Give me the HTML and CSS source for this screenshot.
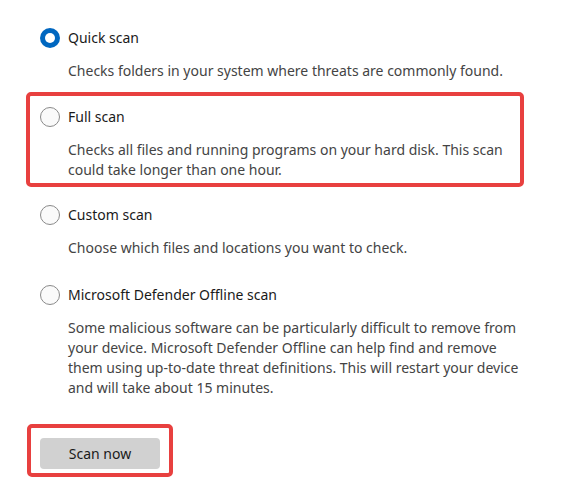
FILE: index.html
```html
<!DOCTYPE html>
<html lang="en">
<head>
<meta charset="utf-8">
<title>Scan options</title>
<link rel="stylesheet" href="styles.css">
</head>
<body>
<main class="page">
  <div class="option first">
    <div class="row"><span class="radio checked"></span><span class="label">Quick scan</span></div>
    <p class="desc">Checks folders in your system where threats are commonly found.</p>
  </div>
  <div class="option mark-box">
    <div class="row"><span class="radio"></span><span class="label">Full scan</span></div>
    <p class="desc">Checks all files and running programs on your hard disk. This scan could take longer than one hour.</p>
  </div>
  <div class="option custom">
    <div class="row"><span class="radio"></span><span class="label">Custom scan</span></div>
    <p class="desc">Choose which files and locations you want to check.</p>
  </div>
  <div class="option offline">
    <div class="row"><span class="radio"></span><span class="label">Microsoft Defender Offline scan</span></div>
    <p class="desc">Some malicious software can be particularly difficult to remove from your device. Microsoft Defender Offline can help find and remove them using up-to-date threat definitions. This will restart your device and will take about 15 minutes.</p>
  </div>
  <div class="btn-mark">
    <button class="scan-btn" type="button">Scan now</button>
  </div>
</main>
</body>
</html>
```
FILE: styles.css
```css
* { box-sizing: border-box; }
html, body { margin: 0; padding: 0; background: #ffffff; }
body {
  font-family: "Noto Sans", "Segoe UI", sans-serif;
  font-size: 14px;
  color: #1a1a1a;
}
.page {
  width: 571px;
  height: 487px;
  padding-left: 40px;
  overflow: hidden;
}
.option { display: flex; flex-direction: column; gap: 13px; }
.option.first { margin-top: 28px; }
.row { display: flex; align-items: center; gap: 8px; height: 20px; }
.radio {
  width: 20px; height: 20px;
  border-radius: 50%;
  border: 1px solid #8a8a8a;
  background: #fafafa;
  flex: none;
  position: relative;
}
.radio.checked {
  border: none;
  background: #0067c0;
}
.radio.checked::after {
  content: "";
  position: absolute;
  left: 5px; top: 5px;
  width: 10px; height: 10px;
  border-radius: 50%;
  background: #ffffff;
}
.label { line-height: 20px; color: #1a1a1a; }
.desc {
  margin: 0;
  padding-left: 28px;
  line-height: 20px;
  color: #444444;
  width: 486px;
}
.mark-box {
  margin-top: 11px;
  margin-left: -14px;
  width: 498px;
  border: 4px solid #e8403f;
  border-radius: 5px;
  padding: 11px 0 3px 10px;
}
.custom { margin-top: 18px; }
.offline { margin-top: 27px; }
.btn-mark {
  margin-top: 26px;
  margin-left: -13px;
  width: 146px;
  height: 53px;
  border: 4px solid #e8403f;
  border-radius: 5px;
  padding: 10px 0 0 9px;
}
.scan-btn {
  display: block;
  width: 120px;
  height: 31px;
  border: none;
  border-radius: 4px;
  background: #d1d1d1;
  font-family: inherit;
  font-size: 14px;
  color: #1a1a1a;
  padding: 0;
}
```
